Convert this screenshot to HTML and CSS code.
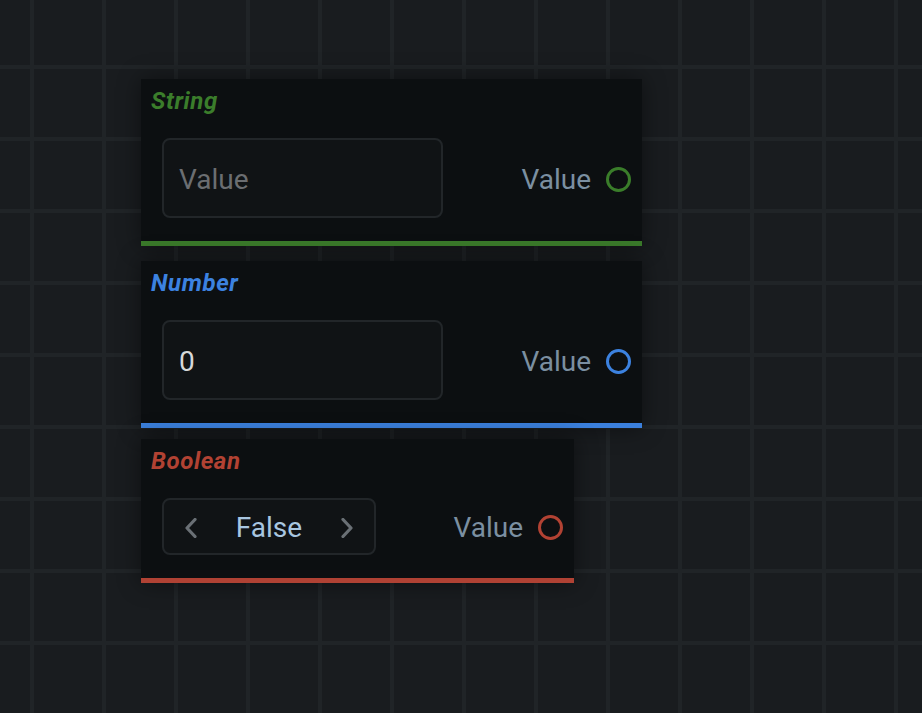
FILE: index.html
```html
<!DOCTYPE html>
<html>
<head>
<meta charset="utf-8">
<link rel="stylesheet" href="styles.css">
</head>
<body>
<div class="canvas">
  <div class="node node-string">
    <div class="node-title">String</div>
    <div class="node-body">
      <div class="field"><span class="placeholder">Value</span></div>
      <div class="output"><span class="out-label">Value</span><span class="socket"></span></div>
    </div>
  </div>
  <div class="node node-number">
    <div class="node-title">Number</div>
    <div class="node-body">
      <div class="field"><span class="field-value">0</span></div>
      <div class="output"><span class="out-label">Value</span><span class="socket"></span></div>
    </div>
  </div>
  <div class="node node-boolean">
    <div class="node-title">Boolean</div>
    <div class="node-body">
      <div class="toggle">
        <svg class="chev" width="14" height="20" viewBox="0 0 14 20"><path d="M11 1.5 L3 10 L11 18.5" fill="none" stroke="currentColor" stroke-width="3.2" stroke-linecap="round" stroke-linejoin="round"/></svg>
        <span class="toggle-value">False</span>
        <svg class="chev" width="14" height="20" viewBox="0 0 14 20"><path d="M3 1.5 L11 10 L3 18.5" fill="none" stroke="currentColor" stroke-width="3.2" stroke-linecap="round" stroke-linejoin="round"/></svg>
      </div>
      <div class="output"><span class="out-label">Value</span><span class="socket"></span></div>
    </div>
  </div>
</div>
</body>
</html>
```

FILE: styles.css
```css
html, body {
  margin: 0;
  padding: 0;
}
body {
  width: 922px;
  height: 713px;
  overflow: hidden;
  font-family: Roboto, "Liberation Sans", sans-serif;
  background-color: #191c1f;
  background-image:
    linear-gradient(to right, #202427 4px, transparent 4px),
    linear-gradient(to bottom, #202427 4px, transparent 4px);
  background-size: 72px 72px;
  background-position: 30px 65px;
}
.canvas {
  position: relative;
  width: 922px;
  height: 713px;
}
.node {
  position: absolute;
  left: 141px;
  background: #0c0f11;
  box-shadow: 0 0 22px rgba(0, 0, 0, 0.45);
  border-bottom: 5px solid;
}
.node-string { top: 79px; width: 501px; border-color: #3a7a2a; }
.node-number { top: 261px; width: 501px; border-color: #3b80dd; }
.node-boolean { top: 439px; width: 433px; border-color: #b04234; }
.node-title {
  padding: 9px 10px 0;
  font-size: 24px;
  letter-spacing: 0.6px;
  line-height: 27px;
  font-weight: 700;
  font-style: italic;
}
.node-string .node-title { color: #3b7d2b; }
.node-number .node-title { color: #3c82e0; }
.node-boolean .node-title { color: #b24233; }
.node-body {
  display: flex;
  align-items: center;
  justify-content: space-between;
  padding: 23px 11px 23px 21px;
}
.field {
  box-sizing: border-box;
  width: 281px;
  height: 80px;
  border: 2px solid #222629;
  border-radius: 8px;
  background: #101315;
  display: flex;
  align-items: center;
  padding-left: 15px;
  padding-top: 2px;
  font-size: 28px;
}
.placeholder { color: #6b6e71; }
.field-value { color: #d6d8da; }
.output {
  display: flex;
  align-items: center;
  gap: 15px;
  padding-top: 2px;
}
.out-label {
  font-size: 28px;
  color: #7b8fa1;
}
.socket {
  box-sizing: border-box;
  width: 25px;
  height: 25px;
  border-radius: 50%;
  border: 3px solid;
}
.node-string .socket { border-color: #3a7d2a; }
.node-number .socket { border-color: #3c82e0; }
.node-boolean .socket { border-color: #b24233; }
.toggle {
  box-sizing: border-box;
  width: 214px;
  height: 57px;
  border: 2px solid #222629;
  border-radius: 8px;
  background: #101315;
  display: flex;
  align-items: center;
  justify-content: space-between;
  padding: 2px 20px 0 20px;
}
.chev { color: #6a7075; display: block; }
.toggle-value {
  font-size: 28px;
  color: #a8c6e0;
}
```
